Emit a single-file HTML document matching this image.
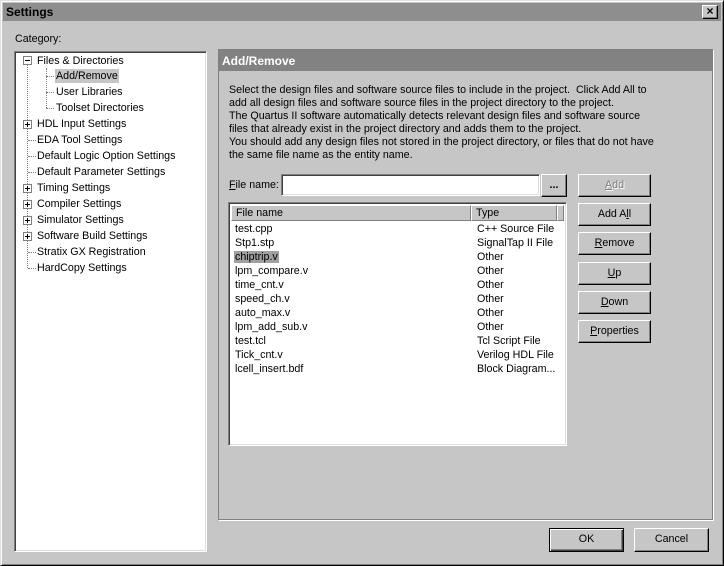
<!DOCTYPE html>
<html><head><style>
*{margin:0;padding:0;box-sizing:border-box}
body{width:724px;height:566px;background:#c6c6c6;font-family:"Liberation Sans",Arial,sans-serif;font-size:10.7px;color:#000;position:relative;overflow:hidden}
.a{position:absolute;white-space:nowrap}
.win{position:absolute;left:0;top:0;width:724px;height:566px;border:1px solid;border-color:#dfdfdf #000 #000 #dfdfdf;box-shadow:inset 1px 1px 0 #fff,inset -1px -1px 0 #808080}
.sunk{position:absolute;background:#fff;border:1px solid;border-color:#808080 #fff #fff #808080;box-shadow:inset 1px 1px 0 #404040,inset -1px -1px 0 #dfdfdf}
.btn{position:absolute;background:#c6c6c6;border:1px solid;border-color:#fff #000 #000 #fff;box-shadow:inset -1px -1px 0 #808080;text-align:center}
.tree div{position:absolute;white-space:nowrap;line-height:14px}
.box{position:absolute;width:9px;height:9px;border:1px solid #808080;background:#fff}
.box:before{content:"";position:absolute;left:1px;top:3px;width:5px;height:1px;background:#000}
.plus:after{content:"";position:absolute;left:3px;top:1px;width:1px;height:5px;background:#000}
.dv{position:absolute;border-left:1px dotted #808080;width:0}
.dh{position:absolute;border-top:1px dotted #808080;height:0}
.hdr{position:absolute;top:2px;height:16px;background:#c6c6c6;border:1px solid;border-color:#fff #808080 #808080 #fff;line-height:14px;padding-left:4px}
.row{position:absolute;line-height:14px}
</style></head><body>
<div class="win"></div>
<div class="a" style="left:3px;top:3px;width:718px;height:18px;background:#8e8e8e"></div>
<div class="a" style="left:6px;top:4px;font-weight:bold;font-size:12px;line-height:16px">Settings</div>
<div class="btn" style="left:702px;top:5px;width:16px;height:14px;line-height:11px;font-weight:bold;font-size:12px">×</div>

<div class="a" style="left:15px;top:33px">Category:</div>
<div class="sunk tree" style="left:14px;top:51px;width:193px;height:501px">
 <div class="dv" style="left:12px;top:13px;height:203px"></div>
 <div class="dv" style="left:31px;top:16px;height:40px"></div>
 <div class="dh" style="left:31px;top:24px;width:8px"></div>
 <div class="dh" style="left:31px;top:40px;width:8px"></div>
 <div class="dh" style="left:31px;top:56px;width:8px"></div>
 <div class="box" style="left:8px;top:4px"></div>
 <div style="left:22px;top:2px">Files &amp; Directories</div>
 <div style="left:40px;top:17px;background:#c6c6c6;padding:0 1px">Add/Remove</div>
 <div style="left:41px;top:33px">User Libraries</div>
 <div style="left:41px;top:49px">Toolset Directories</div>
 <div class="box plus" style="left:8px;top:68px"></div>
 <div style="left:22px;top:65px">HDL Input Settings</div>
 <div class="dh" style="left:13px;top:88px;width:8px"></div>
 <div style="left:22px;top:81px">EDA Tool Settings</div>
 <div class="dh" style="left:13px;top:104px;width:8px"></div>
 <div style="left:22px;top:97px">Default Logic Option Settings</div>
 <div class="dh" style="left:13px;top:120px;width:8px"></div>
 <div style="left:22px;top:113px">Default Parameter Settings</div>
 <div class="box plus" style="left:8px;top:132px"></div>
 <div style="left:22px;top:129px">Timing Settings</div>
 <div class="box plus" style="left:8px;top:148px"></div>
 <div style="left:22px;top:145px">Compiler Settings</div>
 <div class="box plus" style="left:8px;top:164px"></div>
 <div style="left:22px;top:161px">Simulator Settings</div>
 <div class="box plus" style="left:8px;top:180px"></div>
 <div style="left:22px;top:177px">Software Build Settings</div>
 <div class="dh" style="left:13px;top:200px;width:8px"></div>
 <div style="left:22px;top:193px">Stratix GX Registration</div>
 <div class="dh" style="left:13px;top:216px;width:8px"></div>
 <div style="left:22px;top:209px">HardCopy Settings</div>
</div>

<div class="a" style="left:218px;top:49px;width:495px;height:471px;border:1px solid #808080;box-shadow:1px 1px 0 #fff"></div>
<div class="a" style="left:219px;top:50px;width:493px;height:21px;background:#828282"></div>
<div class="a" style="left:222px;top:53px;color:#fff;font-weight:bold;font-size:12px;line-height:16px">Add/Remove</div>
<div class="a" style="left:229px;top:84px;line-height:13px">Select the design files and software source files to include in the project.&nbsp; Click Add All to<br>add all design files and software source files in the project directory to the project.<br>The Quartus II software automatically detects relevant design files and software source<br>files that already exist in the project directory and adds them to the project.<br>You should add any design files not stored in the project directory, or files that do not have<br>the same file name as the entity name.</div>

<div class="a" style="left:229px;top:179px"><u>F</u>ile name:</div>
<div class="sunk" style="left:281px;top:174px;width:259px;height:22px"></div>
<div class="btn" style="left:541px;top:174px;width:26px;height:23px;line-height:20px;font-weight:bold">...</div>

<div class="btn" style="left:578px;top:174px;width:73px;height:23px;line-height:20px;color:#808080;text-shadow:1px 1px 0 #fff"><u>A</u>dd</div>
<div class="btn" style="left:578px;top:203px;width:73px;height:23px;line-height:20px">Add A<u>l</u>l</div>
<div class="btn" style="left:578px;top:232px;width:73px;height:23px;line-height:20px"><u>R</u>emove</div>
<div class="btn" style="left:578px;top:262px;width:73px;height:23px;line-height:20px"><u>U</u>p</div>
<div class="btn" style="left:578px;top:291px;width:73px;height:23px;line-height:20px"><u>D</u>own</div>
<div class="btn" style="left:578px;top:320px;width:73px;height:23px;line-height:20px"><u>P</u>roperties</div>

<div class="sunk" style="left:228px;top:202px;width:339px;height:244px">
 <div class="hdr" style="left:2px;width:240px">File name</div>
 <div class="hdr" style="left:242px;width:86px">Type</div>
 <div class="hdr" style="left:328px;width:7px"></div>
 <div class="row" style="left:6px;top:19px">test.cpp<br>Stp1.stp<br><span style="background:#a0a0a0;padding:0 1px;margin-left:-1px">chiptrip.v</span><br>lpm_compare.v<br>time_cnt.v<br>speed_ch.v<br>auto_max.v<br>lpm_add_sub.v<br>test.tcl<br>Tick_cnt.v<br>lcell_insert.bdf</div>
 <div class="row" style="left:248px;top:19px">C++ Source File<br>SignalTap II File<br>Other<br>Other<br>Other<br>Other<br>Other<br>Other<br>Tcl Script File<br>Verilog HDL File<br>Block Diagram...</div>
</div>

<div class="btn" style="left:549px;top:528px;width:75px;height:24px;line-height:21px;border:1px solid #000;box-shadow:inset 1px 1px 0 #fff,inset -1px -1px 0 #404040,inset -2px -2px 0 #808080">OK</div>
<div class="btn" style="left:634px;top:528px;width:75px;height:24px;line-height:21px">Cancel</div>
</body></html>
